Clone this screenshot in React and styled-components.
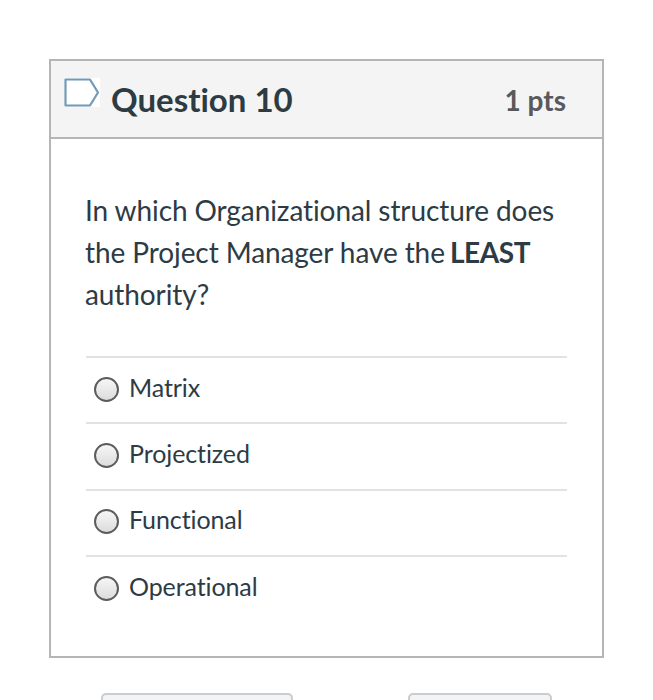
import React from "react";
import styled, { createGlobalStyle } from "styled-components";

const GlobalStyle = createGlobalStyle`
  html, body {
    margin: 0;
    background: #fff;
    height: 700px;
    overflow: hidden;
  }
`;

const Page = styled.div`
  height: 700px;
  padding: 59px 49px 0;
  box-sizing: border-box;
  font-family: Lato, "Open Sans", sans-serif;
  font-variant-ligatures: none;
  color: #2d3b45;
  overflow: hidden;
`;

const Card = styled.section`
  width: 555px;
  height: 599px;
  box-sizing: border-box;
  border: 2px solid #b5b5b5;
`;

const Header = styled.header`
  height: 78px;
  box-sizing: border-box;
  background: #f4f4f4;
  border-bottom: 2px solid #b5b5b5;
  display: flex;
  align-items: center;
  padding: 0 36px 0 13px;
`;

const Flag = styled.svg`
  width: 36px;
  height: 29px;
  margin: -14px 11px 0 0;
  flex: none;
`;

const Title = styled.h2`
  margin: -1px 0 0;
  flex: 1;
  font-size: 33px;
  line-height: 40px;
  font-weight: 700;
`;

const Points = styled.div`
  margin-top: 2px;
  font-size: 28px;
  font-weight: 700;
  color: #59595c;
`;

const Body = styled.div`
  padding: 50px 35px 0;
`;

const Prompt = styled.p`
  margin: 0 0 41px -1px;
  font-size: 28px;
  line-height: 42px;
  letter-spacing: -0.09px;
  b {
    margin-left: -2px;
    font-weight: 700;
    letter-spacing: -0.4px;
  }
`;

const Answer = styled.label`
  display: flex;
  align-items: center;
  height: 66.3px;
  box-sizing: border-box;
  border-top: 2px solid #e2e2e2;
  padding: 0 0 2px 8px;
  font-size: 25px;
  letter-spacing: -0.1px;
`;

const Radio = styled.span`
  width: 25px;
  height: 25px;
  box-sizing: border-box;
  margin-right: 10px;
  border-radius: 50%;
  border: 2px solid #5c5c5c;
  background: linear-gradient(#f6f6f6, #dcdcdc);
  flex: none;
`;

const AnswerText = styled.span`
  margin-bottom: 5px;
`;

const Actions = styled.div`
  display: flex;
  margin: 35px 0 0 52px;
`;

const ActionButton = styled.div`
  width: ${(p) => p.$w}px;
  margin-right: 115px;
  height: 40px;
  box-sizing: border-box;
  flex: none;
  background: #f4f4f4;
  border: 2px solid #c7cdd1;
  border-radius: 5px;
`;

const answers = ["Matrix", "Projectized", "Functional", "Operational"];

const App = () => {
  return (
    <Page>
      <GlobalStyle />
      <Card>
        <Header>
          <Flag viewBox="0 0 36 29">
            <rect width="36" height="29" fill="#fff" />
            <path d="M1.5 1.5H26L34 14.5L26 27.5H1.5Z" fill="#fff" stroke="#6f9ab8" strokeWidth="2.2" strokeLinejoin="round" />
          </Flag>
          <Title>Question 10</Title>
          <Points>1 pts</Points>
        </Header>
        <Body>
          <Prompt>
            In which Organizational structure does the Project Manager have the <b>LEAST</b> authority?
          </Prompt>
          {answers.map((answer) => (
            <Answer key={answer}>
              <Radio />
              <AnswerText>{answer}</AnswerText>
            </Answer>
          ))}
        </Body>
      </Card>
      <Actions>
        <ActionButton $w={192} />
        <ActionButton $w={144} />
      </Actions>
    </Page>
  );
};

export default App;
